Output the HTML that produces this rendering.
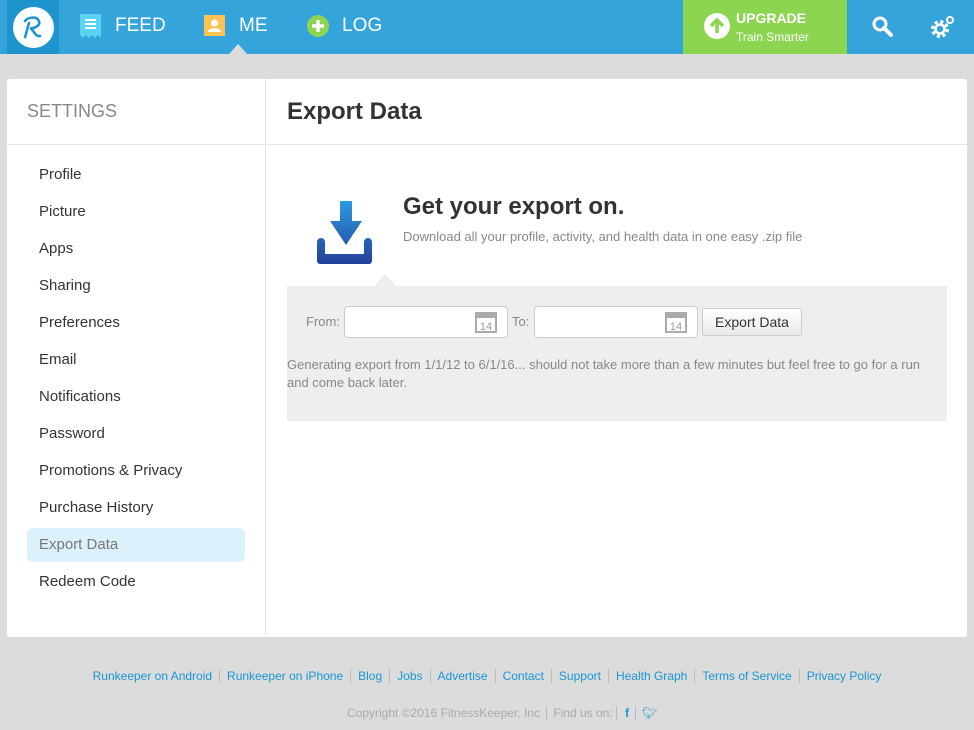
<!DOCTYPE html>
<html><head><meta charset="utf-8"><style>
*{margin:0;padding:0;box-sizing:border-box}
body{width:974px;height:730px;background:#dcdcdc;font-family:"Liberation Sans",sans-serif;position:relative;overflow:hidden}
.nav{position:absolute;left:0;top:0;width:974px;height:54px;background:#34a4db}
.logo{position:absolute;left:7px;top:0;width:52px;height:54px;background:#1e94cf}
.logo .c{position:absolute;left:6px;top:7px;width:41px;height:41px;border-radius:50%;background:#fff}
.ni{position:absolute;top:0;height:54px;line-height:52px;color:#fff;font-size:19px}
.up{position:absolute;left:683px;top:0;width:164px;height:54px;background:#8cd550}
.up b{position:absolute;left:53px;top:10px;color:#fff;font-size:14px}
.up span{position:absolute;left:53px;top:30px;color:#fff;font-size:12px}
.card{position:absolute;left:7px;top:79px;width:960px;height:558px;background:#fff;border-radius:3px}
.side{position:absolute;left:0;top:0;width:259px;height:558px;border-right:1px solid #e5e5e5}
.sh{height:66px;border-bottom:1px solid #e5e5e5;font-size:18px;color:#888;padding:22px 0 0 20px}
.side ul{list-style:none;padding:13px 20px 0 20px}
.side li{height:34px;line-height:34px;margin-bottom:3px;padding-left:12px;font-size:15px;color:#333;border-radius:6px}
.side li.a{background:#dbf1fb;color:#777}
.mh{position:absolute;left:260px;top:0;width:700px;height:66px;border-bottom:1px solid #e5e5e5;font-size:24px;font-weight:bold;color:#333;padding:19px 0 0 20px}
.gray{position:absolute;left:280px;top:207px;width:660px;height:135px;background:#eee}
.inp{position:absolute;top:20px;width:164px;height:32px;background:#fff;border:1px solid #ccc;border-radius:4px}
.lbl{position:absolute;top:28px;font-size:13px;color:#888}
.btn{position:absolute;left:415px;top:22px;width:100px;height:28px;border:1px solid #ccc;border-radius:3px;background:linear-gradient(#fff,#e8e8e8);font-size:14px;color:#333;text-align:center;line-height:26px}
.ft{position:absolute;top:669px;left:0;width:974px;text-align:center;font-size:12px;color:#1a96d3}
.ft a{color:#1a96d3;text-decoration:none;padding:0 7px;border-left:1px solid #bbb}
.ft a:first-child{border:none}
</style></head><body>
<div class="nav">
 <div class="logo"><div class="c"><svg width="41" height="41" viewBox="0 0 41 41"><path d="M12 14c3-4 12-5 14 0s-6 8-9 7c4 2 5 9 10 8M16 16c-2 6-3 12-4 14" fill="none" stroke="#1e94cf" stroke-width="2.6" stroke-linecap="round"/></svg></div></div>
 <svg style="position:absolute;left:80px;top:14px" width="21" height="24"><rect width="21" height="21" fill="#5ad2f4"/><path d="M0 21l3 3 3-3 3 3 3-3 3 3 3-3 3 3v-3z" fill="#5ad2f4"/><rect x="5" y="5" width="11" height="2" fill="#fff"/><rect x="5" y="9" width="11" height="2" fill="#fff"/><rect x="5" y="13" width="11" height="2" fill="#fff"/></svg>
 <div class="ni" style="left:115px">FEED</div>
 <svg style="position:absolute;left:204px;top:15px" width="21" height="21"><rect width="21" height="21" fill="#fcc353"/><circle cx="10.5" cy="8" r="3.5" fill="#fff"/><path d="M4 17c0-5 13-5 13 0z" fill="#fff"/></svg>
 <div class="ni" style="left:239px">ME</div>
 <svg style="position:absolute;left:229px;top:44px" width="18" height="10"><path d="M0 10L9 0l9 10z" fill="#dcdcdc"/></svg>
 <svg style="position:absolute;left:307px;top:15px" width="22" height="22"><circle cx="11" cy="11" r="11" fill="#8cd550"/><path d="M11 5v12M5 11h12" stroke="#fff" stroke-width="3.5"/></svg>
 <div class="ni" style="left:342px">LOG</div>
 <div class="up"><svg style="position:absolute;left:21px;top:13px" width="26" height="26"><circle cx="13" cy="13" r="13" fill="#fff"/><path d="M13 20V8M7 13l6-6 6 6" stroke="#8cd550" stroke-width="3.5" fill="none"/></svg><b>UPGRADE</b><span>Train Smarter</span></div>
 <svg style="position:absolute;left:871px;top:15px" width="22" height="22"><circle cx="9" cy="9" r="6" fill="none" stroke="#fff" stroke-width="3"/><path d="M13 13l7 7" stroke="#fff" stroke-width="4" stroke-linecap="round"/></svg>
 <svg style="position:absolute;left:930px;top:14px" width="26" height="26"><circle cx="10" cy="15" r="7" fill="none" stroke="#fff" stroke-width="4" stroke-dasharray="3 2.5"/><circle cx="10" cy="15" r="4.5" fill="none" stroke="#fff" stroke-width="2.5"/><circle cx="20" cy="6" r="3" fill="none" stroke="#fff" stroke-width="2"/></svg>
</div>
<div class="card">
 <div class="side"><div class="sh">SETTINGS</div><ul>
 <li>Profile</li><li>Picture</li><li>Apps</li><li>Sharing</li><li>Preferences</li><li>Email</li><li>Notifications</li><li>Password</li><li>Promotions &amp; Privacy</li><li>Purchase History</li><li class="a">Export Data</li><li>Redeem Code</li></ul></div>
 <div class="mh">Export Data</div>
 <svg style="position:absolute;left:310px;top:122px" width="56" height="63"><defs><linearGradient id="g" x1="0" y1="0" x2="0" y2="63" gradientUnits="userSpaceOnUse"><stop offset="0" stop-color="#2a9be0"/><stop offset="1" stop-color="#24409a"/></linearGradient></defs><path d="M24 0h10a1 1 0 0 1 1 1v19h10l-16 24-16-24h10V1a1 1 0 0 1 1-1z" fill="url(#g)"/><path d="M0 41a4 4 0 0 1 8 0v12h39V41a4 4 0 0 1 8 0v19a3 3 0 0 1-3 3H3a3 3 0 0 1-3-3z" fill="url(#g)"/></svg>
 <div style="position:absolute;left:396px;top:114px;font-size:24px;font-weight:bold;color:#333">Get your export on.</div>
 <div style="position:absolute;left:396px;top:150px;font-size:13px;color:#888">Download all your profile, activity, and health data in one easy .zip file</div>
 <svg style="position:absolute;left:366px;top:195px" width="24" height="13"><path d="M0 13L12 0l12 13z" fill="#eee"/></svg>
 <div class="gray">
  <div class="lbl" style="left:19px">From:</div>
  <div class="inp" style="left:57px"><svg style="position:absolute;left:130px;top:5px" width="22" height="21"><rect x="1" y="1" width="20" height="19" fill="none" stroke="#aaa" stroke-width="2"/><rect x="1" y="1" width="20" height="5" fill="#aaa"/><text x="11" y="18" font-size="11" text-anchor="middle" fill="#999" font-family="Liberation Sans">14</text></svg></div>
  <div class="lbl" style="left:225px">To:</div>
  <div class="inp" style="left:247px"><svg style="position:absolute;left:130px;top:5px" width="22" height="21"><rect x="1" y="1" width="20" height="19" fill="none" stroke="#aaa" stroke-width="2"/><rect x="1" y="1" width="20" height="5" fill="#aaa"/><text x="11" y="18" font-size="11" text-anchor="middle" fill="#999" font-family="Liberation Sans">14</text></svg></div>
  <div class="btn">Export Data</div>
  <div style="position:absolute;left:0;top:70px;width:650px;font-size:13px;line-height:18px;color:#888">Generating export from 1/1/12 to 6/1/16... should not take more than a few minutes but feel free to go for a run and come back later.</div>
 </div>
</div>
<div class="ft"><a>Runkeeper on Android</a><a>Runkeeper on iPhone</a><a>Blog</a><a>Jobs</a><a>Advertise</a><a>Contact</a><a>Support</a><a>Health Graph</a><a>Terms of Service</a><a>Privacy Policy</a></div>
<div style="position:absolute;top:706px;left:347px;font-size:12px;color:#aaa">Copyright ©2016 FitnessKeeper, Inc <span style="border-left:1px solid #bbb;padding-left:6px;margin-left:3px">Find us on:</span> <span style="border-left:1px solid #bbb;padding:0 6px 0 8px;color:#1a96d3;font-weight:bold">f</span><span style="border-left:1px solid #bbb;padding-left:6px;color:#1a96d3">&#x1F426;&#xFE0E;</span></div>
</body></html>
